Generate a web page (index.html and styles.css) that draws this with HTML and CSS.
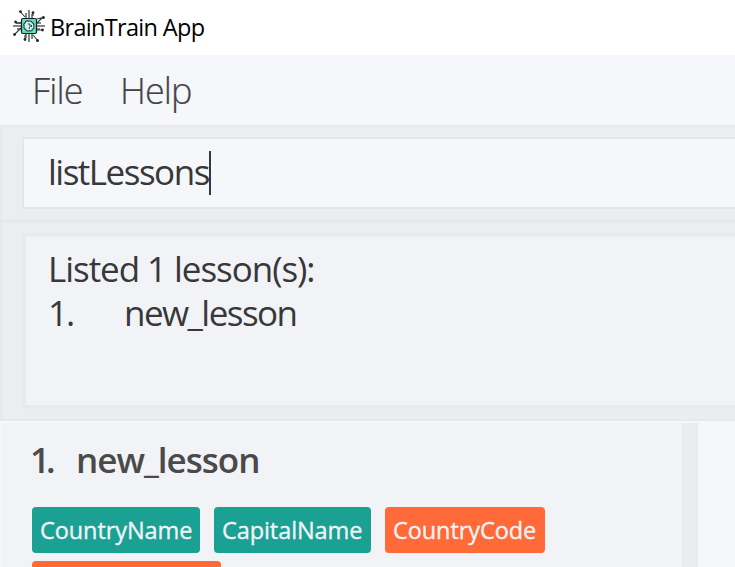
FILE: index.html
```html
<!DOCTYPE html>
<html lang="en">
<head>
<meta charset="utf-8">
<title>BrainTrain App</title>
<link rel="stylesheet" href="styles.css">
</head>
<body>
<div class="window">
  <header class="titlebar">
    <svg class="logo" viewBox="0 0 32 32" width="32" height="32">
      <g fill="#858585">
        <path d="M12 3h2v5h-2zM15 0h2v8h-2zM18 4h2v4h-2zM12 24h2v4h-2zM15 24h2v8h-2zM18 24h2v5h-2zM3 12h5v2H3zM0 15h8v2H0zM4 18h4v2H4zM24 12h4v2h-4zM24 15h8v2h-8zM24 18h3v2h-3z"/>
      </g>
      <path d="M12 7L7 1.500M20 6V3M24 9L30 7.500M8 13H3M8 18L1 25M12 25V29M20 25L25 31M24 20H30M24 13L30 7" fill="none" stroke="#333b3a" stroke-width="1.100"/>
      <g fill="#16312c"><circle cx="7.500" cy="1.700" r="1.400"/><circle cx="20" cy="2.700" r="1.400"/><circle cx="30.400" cy="7.400" r="1.500"/><circle cx="2.600" cy="12" r="1.400"/><circle cx="1.600" cy="24.500" r="1.400"/><circle cx="12" cy="29.500" r="1.400"/><circle cx="24.500" cy="30.400" r="1.500"/><circle cx="29.500" cy="20" r="1.400"/></g>
      <rect x="8.500" y="8.500" width="15" height="15" rx="1.500" fill="#62dcc5" stroke="#10231f" stroke-width="1.200"/>
      <path d="M15.800 11.300c-2-1-3.500 0-3.600 1.500c-1.500.8-1.700 2.200-1 3.300c-.7 1.700.2 3 1.600 3.300c.5 1.700 2.300 2 3.300 1.200c1.400.8 3 .2 3.300-1.300c1.600-.6 2-2 1.300-3.300c.6-1.400 0-2.700-1.400-3.200c-.3-1.500-2-2.200-3.500-1.500z" fill="#d2efec" stroke="#17423c" stroke-width="1.100"/>
      <path d="M15 14h2v2.500L16 19M18.500 15v2" fill="none" stroke="#26443f" stroke-width="1"/>
    </svg>
    <span class="title">BrainTrain App</span>
  </header>
  <nav class="menu"><span class="file">File</span><span class="help">Help</span></nav>
  <section class="command"><div class="field"><span class="typed">listLessons</span><i class="caret"></i></div></section>
  <section class="result">
    <div class="display">
      <div class="line"><span class="listed">Listed 1 lesson(s):</span></div>
      <div class="line"><span class="num">1.</span><span class="name">new_lesson</span></div>
    </div>
  </section>
  <main class="content">
    <section class="lessons">
      <h1 class="lesson"><span class="lesson-num">1.</span><span class="lesson-name">new_lesson</span></h1>
      <div class="tags">
        <span class="tag country">CountryName</span>
        <span class="tag capital">CapitalName</span>
        <span class="tag optional code">CountryCode</span>
        <span class="tag optional extra"></span>
      </div>
    </section>
    <div class="divider"></div>
    <section class="cards"></section>
  </main>
</div>
</body>
</html>
```
FILE: styles.css
```css
* { box-sizing: border-box; }
html, body { margin: 0; overflow: hidden; }
body { font-family: "Open Sans", "Noto Sans", sans-serif; color: #383838; background: #f5f7fb; }
span { white-space: nowrap; }
.window { width: 735px; height: 567px; display: flex; flex-direction: column; overflow: hidden; }
.titlebar { flex: none; height: 55px; background: #fff; display: flex; align-items: flex-start; padding: 10px 0 0 13px; color: #000; }
.logo { flex: none; display: block; overflow: visible; }
.title { font-size: 23.500px; line-height: 35px; margin-left: 5px; letter-spacing: -0.680px; }
.menu { flex: none; height: 70px; background: #f5f7fb; padding: 12px 0 0 32px; display: flex; font-size: 36px; line-height: 48px; font-weight: 300; color: #444; -webkit-text-stroke: 0.200px #444; }
.file { width: 88px; letter-spacing: -0.900px; }
.help { letter-spacing: -0.900px; }
.command { flex: none; height: 96px; background: #ecedf1; border: solid #e7e8ec; border-width: 2px 0 2px 2px; padding: 10px 0 0 20px; }
.field { height: 72px; background: #f5f7fb; border: 2px solid #e5e6ea; border-right: 0; display: flex; align-items: center; padding-left: 24px; font-size: 35px; letter-spacing: -1.500px; }
.typed { line-height: 44px; margin-bottom: 3px; }
.caret { width: 2px; height: 44px; background: #383838; }
.result { flex: none; height: 200px; background: #ecedf1; border: solid #e7e8ec; border-width: 2px 0 2px 2px; padding: 10px 0 0 20px; }
.display { height: 176px; background: #f2f3f7; border: solid #e9eaee; border-width: 4px 0 4px 4px; padding: 10px 0 0 22px; font-size: 35px; }
.line { height: 44px; line-height: 44px; display: flex; }
.listed { letter-spacing: -1.050px; }
.name { letter-spacing: -1.550px; }
.num { width: 76px; letter-spacing: -2px; }
.content { flex: 1; min-height: 0; display: flex; border-top: 2px solid #f6f7fb; }
.lessons { width: 682px; background: #f2f3f7; border-left: 2px solid #f5f6fa; padding: 12px 0 0 30px; }
.lesson { margin: 0; height: 50px; line-height: 49px; font-size: 35px; font-weight: 600; color: #4a4a4a; display: flex; letter-spacing: -1px; }
.lesson-num { width: 46px; margin-left: -2px; letter-spacing: -4px; }
.tags { display: flex; flex-wrap: wrap; gap: 8px 14px; margin-top: 22px; }
.tag { height: 46px; line-height: 47px; padding-left: 8px; border-radius: 4px; background: #1aa193; color: #f2f3f7; font-size: 23.500px; letter-spacing: -0.080px; -webkit-text-stroke: 0.350px #f2f3f7; }
.country { width: 168px; }
.capital { width: 157px; }
.optional { background: #ff6a38; }
.code { width: 160px; margin-right: 100px; }
.extra { width: 189px; }
.divider { width: 16px; background: #ebecf0; }
.cards { flex: 1; background: #f5f7fb; }
```
